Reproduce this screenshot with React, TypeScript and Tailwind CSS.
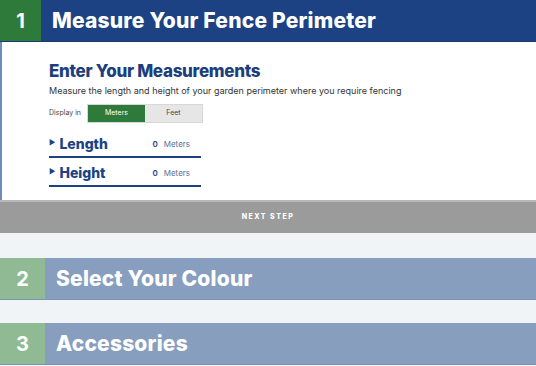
import React, { useState } from 'react';

type Unit = 'Meters' | 'Feet';

function StepHeader({ num, title, active }: { num: number; title: string; active?: boolean }) {
  return (
    <div className={`flex h-[42px] items-stretch border-b ${active ? 'bg-[#1c4283] border-[#163a72]' : 'bg-[#879ebf] border-[#7a93b6]'}`}>
      <div
        className={`flex items-center justify-center text-[20px] font-bold text-white ${active ? 'w-[41px] bg-[#2e7a3a]' : 'w-[45px] bg-[#8fba94]'}`}
      >
        {num}
      </div>
      <h2 className="flex items-center pl-[11px] text-[21px] font-extrabold tracking-[0.2px] text-white">
        {title}
      </h2>
    </div>
  );
}

function MeasureRow({ label, value, unit }: { label: string; value: number; unit: Unit }) {
  return (
    <div className="flex h-[29px] w-[152px] items-center border-b-2 border-[#1c4283] pt-[2px]">
      <span className="mr-[4px] text-[7px] text-[#1c4283]">▶</span>
      <span className="w-[93px] text-[14px] font-extrabold text-[#1c4283]">{label}</span>
      <span className="text-[8px] font-semibold text-[#1c4283]">{value}</span>
      <span className="ml-[6px] text-[8px] text-[#5a7099]">{unit}</span>
    </div>
  );
}

export default function App() {
  const [unit, setUnit] = useState<Unit>('Meters');

  return (
    <div className="min-h-[366px] w-[536px] bg-[#f0f4f7] font-['Inter',sans-serif]">
      <StepHeader num={1} title="Measure Your Fence Perimeter" active />
      <div className="border-l-2 border-[#6d8cbc] bg-white pb-[13px] pl-[47px] pt-[18px]">
        <h3 className="text-[17px] font-extrabold leading-[22px] tracking-[-0.3px] text-[#1c3f7c]">Enter Your Measurements</h3>
        <p className="mt-[3px] text-[9px] leading-[12px] text-[#333]">
          Measure the length and height of your garden perimeter where you require fencing
        </p>
        <div className="mt-[7px] flex items-center">
          <span className="mr-[6px] text-[7px] text-[#444]">Display in</span>
          <div className="flex h-[19px] border border-[#d8d8d8]">
            {(['Meters', 'Feet'] as Unit[]).map((u) => (
              <button
                key={u}
                onClick={() => setUnit(u)}
                className={`w-[57px] text-[7px] ${unit === u ? 'bg-[#2e7a3a] text-white' : 'bg-[#e6e6e6] text-[#444]'}`}
              >
                {u}
              </button>
            ))}
          </div>
        </div>
        <div className="mt-[6px]">
          <MeasureRow label="Length" value={0} unit={unit} />
          <MeasureRow label="Height" value={0} unit={unit} />
        </div>
      </div>
      <button className="flex h-[33px] w-full items-center justify-center border-t-2 border-[#b8b8b8] bg-[#9b9b9b] text-[7px] font-extrabold tracking-[1.5px] text-white">
        NEXT STEP
      </button>
      <div className="mt-[25px] flex flex-col gap-[23px]">
        <StepHeader num={2} title="Select Your Colour" />
        <StepHeader num={3} title="Accessories" />
      </div>
    </div>
  );
}
